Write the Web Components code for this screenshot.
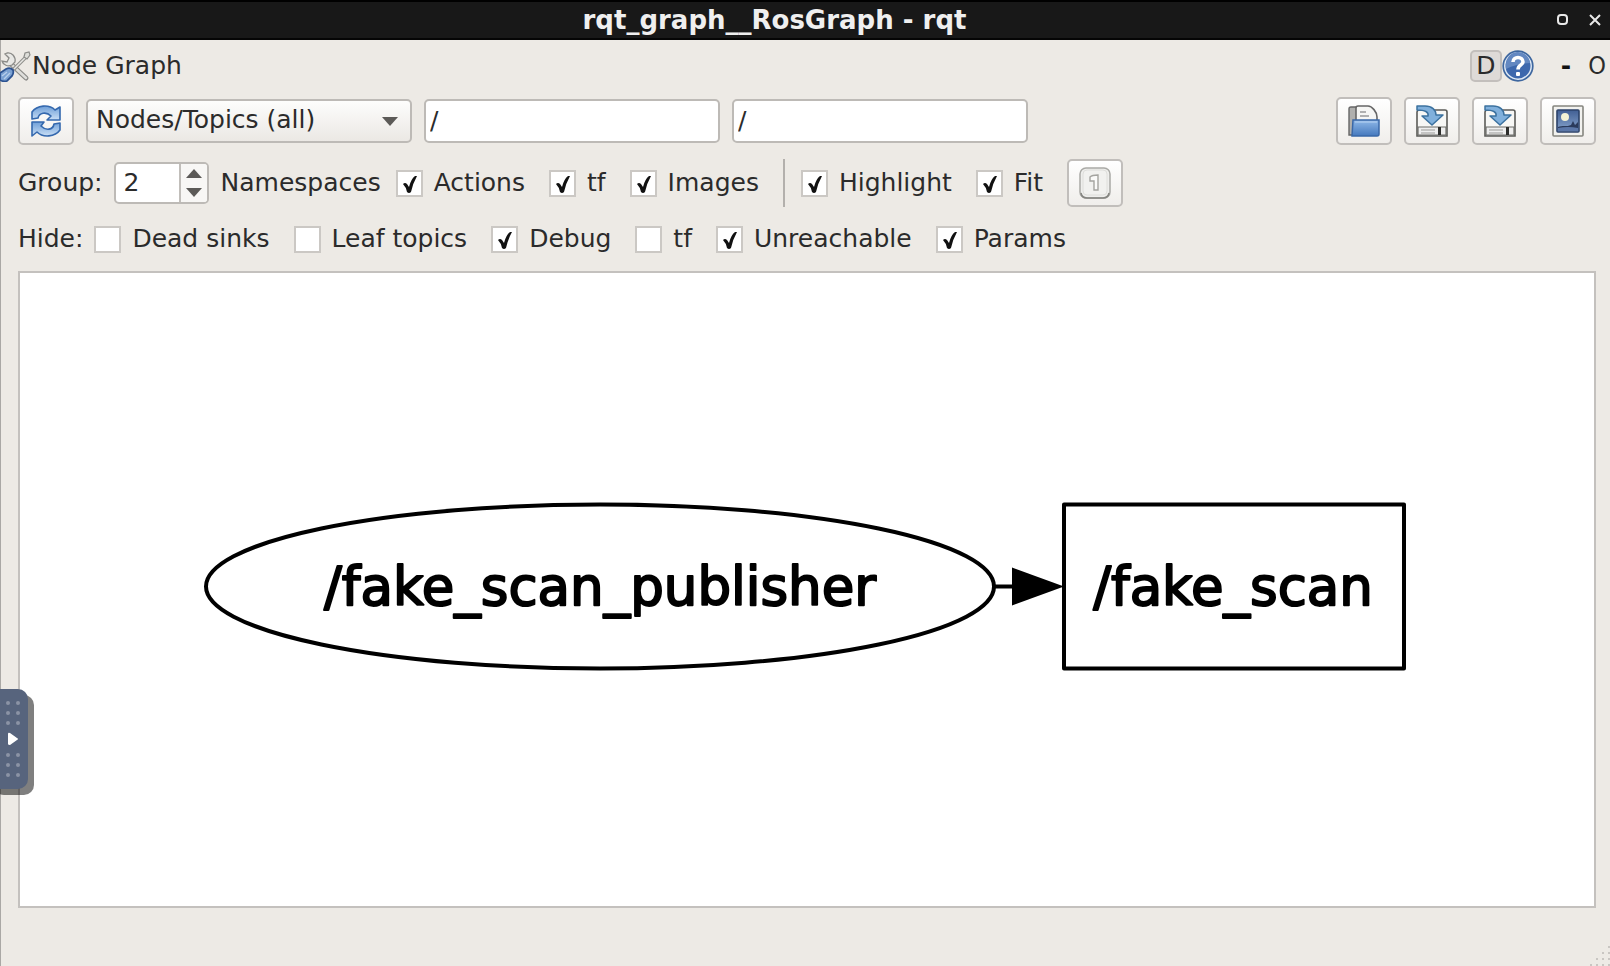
<!DOCTYPE html>
<html lang="en">
<head>
<meta charset="utf-8">
<title>rqt_graph__RosGraph - rqt</title>
<style>
  html, body { height: 100%; margin: 0; }
  body { background: #edeae5; font: 25px/32px "DejaVu Sans", sans-serif; color: #2b2b2b; }
</style>
</head>
<body>
<rqt-window>
  <title-bar slot="title">rqt_graph__RosGraph - rqt</title-bar>
  <dock-header slot="header">Node Graph</dock-header>

  <tool-row slot="tools">
    <tool-button icon="refresh" label="Refresh graph"></tool-button>
    <combo-box label="Graph type">Nodes/Topics (all)</combo-box>
    <filter-field label="Node filter" value="/"></filter-field>
    <filter-field label="Topic filter" value="/"></filter-field>
    <tool-button slot="end" icon="open" label="Load DOT graph"></tool-button>
    <tool-button slot="end" icon="save" label="Save as DOT graph"></tool-button>
    <tool-button slot="end" icon="save" label="Save as SVG"></tool-button>
    <tool-button slot="end" icon="image" label="Save as image"></tool-button>
  </tool-row>

  <option-row slot="tools">
    <spin-box value="2">Group:</spin-box>
    <check-option before="Namespaces" checked>Actions</check-option>
    <check-option checked>tf</check-option>
    <check-option checked>Images</check-option>
    <row-divider></row-divider>
    <check-option checked>Highlight</check-option>
    <check-option checked>Fit</check-option>
    <tool-button icon="one" label="Fit in view"></tool-button>
  </option-row>

  <option-row slot="tools">
    <check-option before="Hide:">Dead sinks</check-option>
    <check-option>Leaf topics</check-option>
    <check-option checked>Debug</check-option>
    <check-option>tf</check-option>
    <check-option checked>Unreachable</check-option>
    <check-option checked>Params</check-option>
  </option-row>

  <node-graph></node-graph>
  <size-grip slot="status"></size-grip>
</rqt-window>
<side-handle></side-handle>

<script>
const define = (name, html, setup) => {
  const template = document.createElement('template');
  template.innerHTML = html;
  customElements.define(name, class extends HTMLElement {
    constructor() {
      super();
      this.attachShadow({ mode: 'open' }).append(template.content.cloneNode(true));
    }
    connectedCallback() {
      if (setup) setup(this, this.shadowRoot);
    }
  });
};

const ICONS = {
  refresh: `
    <defs><linearGradient id="g" x2="0" y2="1"><stop stop-color="#6f9fd8"/><stop offset="1" stop-color="#c9def5"/></linearGradient></defs>
    <path d="M2 14V7C7 0 19 -1 25 5L30 2V15H17L21 11C16 6 9 8 8 13Z" fill="url(#g)" stroke="#3468ae" stroke-width="1.6" stroke-linejoin="round"/>
    <path d="M30 18V25C25 32 13 33 7 27L2 31V17H14L11 21C16 26 23 25 24 19Z" fill="url(#g)" stroke="#3468ae" stroke-width="1.6" stroke-linejoin="round"/>`,
  open: `
    <defs><linearGradient id="g" x2="0" y2="1"><stop stop-color="#8fb8e8"/><stop offset="1" stop-color="#4478bd"/></linearGradient></defs>
    <path d="M1 30V4Q1 2 3 2H10V30Z" fill="#b0b0ae" stroke="#666" stroke-width="1.4"/>
    <path d="M8 18V3Q8 1 10 1H20C24 1 29 7 29 12V18Z" fill="#f6f6f4" stroke="#666" stroke-width="1.6"/>
    <path d="M12 7H18M12 11H21" stroke="#999" stroke-width="1.4"/>
    <path d="M5 15H31V29Q31 31 29 31H4Z" fill="url(#g)" stroke="#3a68a8" stroke-width="1.5"/>
    <path d="M7 17H29" stroke="#b8d3f2"/>`,
  save: `
    <path d="M2 5H29Q31 5 31 7V31H1V7Z" fill="#f7f7f5" stroke="#5b5b58" stroke-width="1.6"/>
    <path d="M2 22H30V30H2Z" fill="#eee" stroke="#6c6c68" stroke-width="1.2"/>
    <path d="M5 25H19M5 28H19" stroke="#9b9b98"/>
    <path d="M22 22H25V30H22Z" fill="#2d2d2b"/>
    <path d="M1 1H9C16 1 20 5 20 10H27L16 20L6 11H12C13 7 9 5 1 5Z" fill="#80b0dc" stroke="#3b719f" stroke-width="1.5" stroke-linejoin="round"/>`,
  image: `
    <defs><linearGradient id="g" x2="0" y2="1"><stop stop-color="#415f94"/><stop offset="1" stop-color="#8aa7cf"/></linearGradient></defs>
    <rect x="1" y="1" width="30" height="30" rx="1" fill="#f2f2ef" stroke="#85857f" stroke-width="1.6"/>
    <rect x="5" y="5" width="22" height="22" rx="1" fill="url(#g)" stroke="#2c4269" stroke-width="1.6"/>
    <circle cx="13" cy="12" r="4" fill="#f4f3d5"/>
    <path d="M6 22C10 20 15 22 19 20L21 16L23 20L26 17V23H6Z" fill="#2a3a5b"/>
    <path d="M6 23Q16 21 26 23V26H6Z" fill="#5b77a8"/>`,
  one: `
    <rect x="1" y="1" width="30" height="30" rx="6" fill="#eeeeec" stroke="#a9a9a5" stroke-width="1.5"/>
    <path d="M2 26Q3 31 8 31H24Q29 31 30 26" fill="none" stroke="#858581" stroke-width="1.5"/>
    <rect x="4" y="3" width="24" height="25" rx="4" fill="#f1f1ef" stroke="#dededb"/>
    <path d="M11 13L11 10Q13 8 19 8V23H15V14H11Z" fill="#fafaf9" stroke="#a4a4a0" stroke-width="1.4"/>`
};

define('rqt-window', `
  <style>
    :host { display: flex; flex-direction: column; min-height: 100%; box-sizing: border-box; border-left: 1px solid #aaa8a5; }
    .tools { display: flex; flex-direction: column; gap: 8px; padding: 0 14px 0 17px; }
    main { flex: 1; display: flex; padding: 8px 14px 0 17px; }
    ::slotted(node-graph) { flex: 1; }
    footer { height: 58px; display: flex; justify-content: flex-end; align-items: flex-end; }
  </style>
  <slot name="title"></slot>
  <slot name="header"></slot>
  <div class="tools"><slot name="tools"></slot></div>
  <main><slot></slot></main>
  <footer><slot name="status"></slot></footer>`);

define('title-bar', `
  <style>
    :host { display: flex; align-items: center; height: 40px; margin-left: -1px; box-sizing: border-box; background: #181818; border-top: 2px solid #000; border-bottom: 2px solid #050505; color: #efefef; }
    h1 { flex: 1; margin: 0; padding-right: 4px; font: bold 26px/32px "DejaVu Sans", sans-serif; text-align: center; }
    nav { display: flex; gap: 12px; padding-right: 5px; }
    button { width: 20px; height: 20px; padding: 0; border: 0; background: none; display: grid; place-items: center; }
  </style>
  <h1><slot></slot></h1>
  <nav>
    <button aria-label="Maximize"><svg width="14" height="14"><rect x="2" y="2" width="9" height="9" rx="3" fill="none" stroke="#e8e8e8" stroke-width="2"/></svg></button>
    <button aria-label="Close"><svg width="14" height="14"><path d="M2 2L12 12M12 2L2 12" stroke="#e8e8e8" stroke-width="2"/></svg></button>
  </nav>`);

define('dock-header', `
  <style>
    :host { display: flex; align-items: center; height: 51px; box-sizing: border-box; padding-right: 4px; margin-left: -1px; }
    svg { display: block; }
    h2 { flex: 1; margin: 0; font: inherit; }
    button { font: inherit; color: inherit; padding: 0; border: 0; background: none; }
    .d { width: 32px; height: 32px; line-height: 28px; box-sizing: border-box; border: 2px solid #c3bfbc; border-radius: 5px; background: #dedad7; }
    .minus { font-weight: bold; color: #111; width: 16px; margin-left: 24px; }
    .float { font-family: "DejaVu Sans Condensed", "DejaVu Sans", sans-serif; width: 18px; margin-left: 14px; }
  </style>
  <svg width="32" height="32" viewBox="0 0 32 32" aria-hidden="true">
    <path d="M12 15L26 28" stroke="#8b8b88" stroke-width="5" stroke-linecap="round"/>
    <path d="M12 15L26 28" stroke="#dededb" stroke-width="2.5" stroke-linecap="round"/>
    <path d="M5 4L9 8L7 12L2 11C3 15 8 17 12 15L15 12C16 7 12 2 7 3Z" fill="#e8e8e5" stroke="#8b8b88" stroke-width="1.3"/>
    <path d="M14 19L25 8" stroke="#90908d" stroke-width="3.5"/>
    <path d="M14 19L25 8" stroke="#e7e7e4" stroke-width="1.4"/>
    <path d="M24 7L25 3L29 2L30 5L27 9Z" fill="#deded9" stroke="#8b8b88" stroke-width="1.2"/>
    <path d="M0 23L6 19Q10 17 13 20Q14 23 12 26L7 31Q3 32 0 30Z" fill="#7ba1d2" stroke="#2d5391" stroke-width="1.8"/>
    <path d="M2 26L7 22M4 29L10 23" stroke="#b7cfeb" stroke-width="1.4"/>
  </svg>
  <h2><slot></slot></h2>
  <button class="d" aria-label="Dock">D</button>
  <button aria-label="Help"><svg width="32" height="32" viewBox="0 0 32 32">
    <circle cx="16" cy="16" r="14.8" fill="#dfe9f5" stroke="#3e679f" stroke-width="1.7"/>
    <circle cx="16" cy="16" r="12.5" fill="#3d68ad"/>
    <path d="M4 15A12 12 0 0 1 28 13Q16 13 4 19Z" fill="#6388c1"/>
    <path d="M11 12C11 6 21 6 21 12C21 15 16 15 16 19.5" fill="none" stroke="#fff" stroke-width="3.6"/>
    <rect x="14" y="22" width="4" height="4" rx="1" fill="#fff"/>
  </svg></button>
  <button class="minus" aria-label="Minimize">-</button>
  <button class="float" aria-label="Undock">O</button>`);

define('tool-row', `
  <style>
    :host, div { display: flex; align-items: center; gap: 12px; }
    :host { justify-content: space-between; height: 60px; }
  </style>
  <div><slot></slot></div><div><slot name="end"></slot></div>`);

define('option-row', `
  <style>:host { display: flex; align-items: center; gap: 24px; height: 48px; }
    ::slotted(spin-box) { margin-right: -12px; }
    ::slotted(row-divider) { margin-right: -8px; }
  </style>
  <slot></slot>`);

define('row-divider', `
  <style>:host { display: block; width: 2px; height: 48px; background: #b3b0ac; }</style>`);

define('tool-button', `
  <style>
    :host { display: block; }
    button { width: 56px; height: 48px; box-sizing: border-box; display: grid; place-items: center; padding: 0; border: 2px solid #c1bebb; border-radius: 5px; background: linear-gradient(#fff, #f0eeeb); }
    svg { overflow: visible; }
  </style>
  <button><svg width="32" height="32" viewBox="0 0 32 32"></svg></button>`,
  (el, root) => {
    root.querySelector('button').setAttribute('aria-label', el.getAttribute('label'));
    root.querySelector('svg').innerHTML = ICONS[el.getAttribute('icon')];
  });

define('combo-box', `
  <style>
    :host { display: grid; align-items: center; width: 326px; }
    select { grid-area: 1 / 1; width: 100%; height: 44px; box-sizing: border-box; appearance: none; font: inherit; color: inherit; padding: 0 40px 2px 8px; border: 2px solid #bdbab6; border-radius: 5px; background: linear-gradient(#fdfdfc, #ebe8e4); }
    svg { grid-area: 1 / 1; justify-self: end; margin-right: 14px; pointer-events: none; }
  </style>
  <select><option></option></select>
  <svg width="16" height="9"><path d="M0 0H16L8 9Z" fill="#5c5a57"/></svg>`,
  (el, root) => {
    root.querySelector('select').setAttribute('aria-label', el.getAttribute('label'));
    root.querySelector('option').textContent = el.textContent;
  });

define('filter-field', `
  <style>
    :host { display: block; width: 296px; }
    input { width: 100%; height: 44px; box-sizing: border-box; display: block; font: inherit; color: inherit; padding: 0 4px 2px; border: 2px solid #bdbab6; border-radius: 5px; background: #fff; }
  </style>
  <input type="text">`,
  (el, root) => {
    const input = root.querySelector('input');
    input.value = el.getAttribute('value');
    input.setAttribute('aria-label', el.getAttribute('label'));
  });

define('spin-box', `
  <style>
    :host { display: flex; align-items: center; gap: 11px; }
    .box { display: flex; width: 95px; height: 42px; box-sizing: border-box; border: 2px solid #bdbab6; border-radius: 5px; background: #fff; overflow: hidden; }
    input { flex: 1; min-width: 0; font: inherit; color: inherit; border: 0; padding: 0 0 0 8px; background: none; appearance: textfield; -moz-appearance: textfield; }
    input::-webkit-inner-spin-button { appearance: none; -webkit-appearance: none; margin: 0; }
    .steps { display: flex; flex-direction: column; width: 26px; border-left: 2px solid #c1beba; background: #f8f7f5; }
    button { flex: 1; display: grid; place-items: center; border: 0; padding: 0; background: none; }
  </style>
  <label for="n"><slot></slot></label>
  <div class="box">
    <input id="n" type="number">
    <div class="steps">
      <button aria-label="Increase"><svg width="16" height="9"><path d="M0 9H16L8 0Z" fill="#5c5a57"/></svg></button>
      <button aria-label="Decrease"><svg width="16" height="9"><path d="M0 0H16L8 9Z" fill="#5c5a57"/></svg></button>
    </div>
  </div>`,
  (el, root) => { root.querySelector('input').value = el.getAttribute('value'); });

define('check-option', `
  <style>
    :host { display: flex; align-items: center; gap: 11px; white-space: nowrap; }
    :host([before="Namespaces"]) { gap: 15px; }
    span:empty { display: none; }
    label { display: flex; align-items: center; gap: 11px; }
    .box { display: grid; }
    input { grid-area: 1 / 1; appearance: none; width: 27px; height: 27px; margin: 0; box-sizing: border-box; border: 2px solid #cbc8c4; background: #fff; }
    svg { grid-area: 1 / 1; visibility: hidden; pointer-events: none; }
    input:checked + svg { visibility: visible; }
  </style>
  <span></span>
  <label>
    <div class="box"><input type="checkbox"><svg width="27" height="27"><path d="M7 14Q9 12 11 14L13 17Q15 9 19 6L21 6Q17 13 15 22Q13 24 11 22Q10 17 7 14Z" fill="#111"/></svg></div>
    <slot></slot>
  </label>`,
  (el, root) => {
    root.querySelector('span').textContent = el.getAttribute('before') || '';
    root.querySelector('input').checked = el.hasAttribute('checked');
  });

define('node-graph', `
  <style>
    :host { display: grid; box-sizing: border-box; border: 2px solid #c4c1be; background: #fff; min-height: 240px; }
    svg { display: block; width: 100%; height: 100%; }
    text { font: 53px "DejaVu Sans", sans-serif; fill: #000; stroke: #000; stroke-width: 2; stroke-linejoin: round; text-anchor: middle; }
    .shape { fill: none; stroke: #000; stroke-width: 4; stroke-linejoin: round; }
  </style>
  <svg viewBox="20 273 1574 632" role="img" aria-label="ROS node graph">
    <ellipse class="shape" cx="600" cy="586" rx="394" ry="82"/>
    <text x="600" y="604">/fake_scan_publisher</text>
    <path class="shape" d="M995 586H1014"/>
    <path d="M1012 567L1064 586L1012 605Z"/>
    <rect class="shape" x="1064" y="504" width="340" height="164"/>
    <text x="1233" y="604">/fake_scan</text>
  </svg>`);

define('size-grip', `
  <style>:host { display: block; } svg { display: block; }</style>
  <svg width="21" height="21" fill="#c9c6c2">
    <path d="M19 1h2v2h-2zM13 7h2v2h-2zM19 7h2v2h-2zM7 13h2v2h-2zM13 13h2v2h-2zM19 13h2v2h-2zM1 19h2v2h-2zM7 19h2v2h-2zM13 19h2v2h-2zM19 19h2v2h-2z"/>
  </svg>`);

define('side-handle', `
  <style>
    :host { position: absolute; left: 0; top: 689px; display: block; }
    button { display: flex; align-items: center; justify-content: flex-end; margin-left: -12px; width: 40px; height: 100px; padding: 0 8px 0 0; border: 0; border-radius: 10px; background: #57647d; box-shadow: 6px 6px 0 rgba(0, 0, 0, .5); }
  </style>
  <button aria-label="Show controls"><svg width="14" height="78" fill="#8b93a5">
    <g id="dots"></g>
    <path d="M2 34Q2 32 4 33L11 38Q13 39 11 40L4 45Q2 45 2 44Z" fill="#fff"/>
  </svg></button>`,
  (el, root) => {
    root.querySelector('#dots').innerHTML = [3, 13, 23, 55, 65, 75]
      .map(y => `<circle cx="2" cy="${y}" r="2"/><circle cx="12" cy="${y}" r="2"/>`).join('');
  });
</script>
</body>
</html>
